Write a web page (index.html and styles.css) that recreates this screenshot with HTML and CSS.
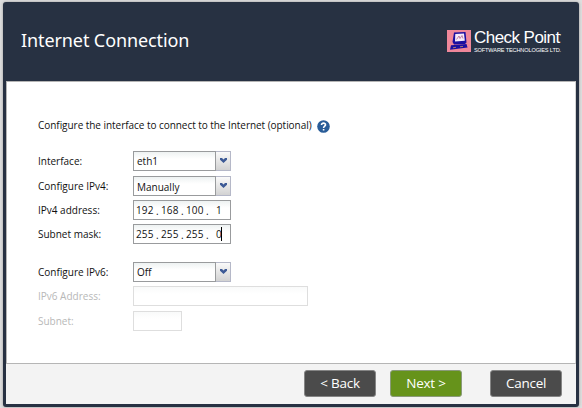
FILE: index.html
```html
<!DOCTYPE html>
<html lang="en">
<head>
<meta charset="utf-8">
<title>Internet Connection</title>
<link rel="stylesheet" href="styles.css">
</head>
<body>
<div class="window">
  <header class="header">
    <h1>Internet Connection</h1>
    <div class="brand">
      <svg class="logo" width="24" height="22" viewBox="0 0 24 22">
        <rect width="24" height="22" fill="#ef879a"/>
        <path d="M7 2.5 18.5 2 19.5 12.5 18 14 7 14.5 5.5 12Z" fill="#1c10a0"/>
        <path d="M8.3 4 17 3.5 17.8 10.8 8 11.5Z" fill="#f6eafa"/>
        <path d="M9.5 9.5 12 6 13 8.5 15 5.5 16 8.5" fill="none" stroke="#b0688c" stroke-width=".8"/>
        <path d="M4 15.3 19.5 14 20.5 17.5 3 19.8Z" fill="#1c10a0"/>
        <path d="M6 17.8 9 17.3M13 16.8 16 16.4" stroke="#a87a70" stroke-width="1"/>
      </svg>
      <div class="brand-text">
        <div class="brand-name">Check Point<i>'</i></div>
        <div class="brand-sub">SOFTWARE TECHNOLOGIES LTD.</div>
      </div>
    </div>
  </header>
  <main class="content">
    <div class="intro"><span>Configure the interface to connect to the Internet (optional)</span>
      <svg width="13" height="13" viewBox="0 0 13 13"><circle cx="6.5" cy="6.5" r="6.3" fill="#295c98"/><path d="M4.5 4.9C4.5 2.5 8.6 2.6 8.5 4.9 8.4 6.3 6.6 6.2 6.6 8M6.6 9V10.6" fill="none" stroke="#fff" stroke-width="1.6"/></svg>
    </div>
    <div class="row r1"><label>Interface:</label><div class="combo"><div class="field">eth1</div><div class="trigger"><svg width="7" height="5" viewBox="0 0 7 5"><path d="M0 0H2L3.5 1.5 5 0H7V1.8L3.5 5 0 1.8Z" fill="#3d5a96"/></svg></div></div></div>
    <div class="row r2"><label>Configure IPv4:</label><div class="combo"><div class="field low">Manually</div><div class="trigger"><svg width="7" height="5" viewBox="0 0 7 5"><path d="M0 0H2L3.5 1.5 5 0H7V1.8L3.5 5 0 1.8Z" fill="#3d5a96"/></svg></div></div></div>
    <div class="row r3"><label>IPv4 address:</label><div class="field ip"><span>192</span><b>.</b><span>168</span><b>.</b><span>100</span><b>.</b><span class="last">1</span></div></div>
    <div class="row r4"><label>Subnet mask:</label><div class="field ip"><span>255</span><b>.</b><span>255</span><b>.</b><span>255</span><b>.</b><span class="last">0</span><em class="caret"></em></div></div>
    <div class="row r5"><label>Configure IPv6:</label><div class="combo"><div class="field">Off</div><div class="trigger"><svg width="7" height="5" viewBox="0 0 7 5"><path d="M0 0H2L3.5 1.5 5 0H7V1.8L3.5 5 0 1.8Z" fill="#3d5a96"/></svg></div></div></div>
    <div class="row r6 disabled"><label>IPv6 Address:</label><div class="field wide"></div></div>
    <div class="row r7 disabled"><label>Subnet:</label><div class="field short"></div></div>
  </main>
  <footer class="footer">
    <div class="btn">&lt; Back</div>
    <div class="btn next">Next &gt;</div>
    <div class="btn cancel">Cancel</div>
  </footer>
</div>
</body>
</html>
```
FILE: styles.css
```css
* { box-sizing: border-box; }
body {
  margin: 0;
  width: 582px;
  height: 408px;
  padding: 2px 3px 1px;
  overflow: hidden;
  background: #dedede;
  font-family: "Open Sans", "Noto Sans", sans-serif;
}
.window {
  height: 405px;
  padding: 0 3px 3px;
  display: flex;
  flex-direction: column;
  background: #273142;
  border-radius: 3px;
  box-shadow: 0 0 3px #999;
}
.header {
  height: 79px;
  padding: 0 13px 0 15px;
  display: flex;
  justify-content: space-between;
}
h1 {
  margin: 26px 0 0;
  font: 400 18px/25px "Noto Sans", sans-serif;
  letter-spacing: -0.1px;
  color: #fff;
}
.brand {
  display: flex;
  width: 116px;
  margin-top: 28px;
  gap: 3px;
  color: #fff;
  font-family: "Liberation Sans", Arial, sans-serif;
  white-space: nowrap;
}
.logo { flex: none; }
.brand-name { font-size: 17px; line-height: 16px; letter-spacing: -0.55px; }
.brand-name i { font-size: 8px; font-style: normal; vertical-align: 4px; line-height: 1px; }
.brand-sub { font-size: 5.6px; line-height: 8px; letter-spacing: -0.14px; }
.content {
  height: 283px;
  padding: 36px 0 0 31px;
  background: #fff;
  border: 1px solid #b5b5b5;
  border-right-color: #d5d5d5;
  font-size: 10px;
  letter-spacing: 0;
  color: #111;
}
.intro { display: flex; height: 16px; gap: 5px; align-items: center; margin-bottom: 17px; letter-spacing: -0.045px; }
.intro span { line-height: 14px; margin-top: -2px; }
.row { display: flex; height: 20px; margin-bottom: 5px; }
.r2, .r3, .r6, .r7 { margin-bottom: 4px; }
.r4 { margin-bottom: 18px; }
.r6 { margin-bottom: 5px; }
.r5 { margin-bottom: 4px; }
label { width: 95px; line-height: 20px; }
.combo { display: flex; }
.field {
  width: 83px;
  height: 20px;
  padding-left: 3px;
  border: 1px solid #999b9d;
  background: linear-gradient(#eef2f2, #fff 7px);
  line-height: 19px;
}
.low { line-height: 20px; }
.trigger {
  width: 15px;
  display: flex;
  justify-content: center;
  padding-top: 6px;
  border: 1px solid #b5b8c8;
  border-left: 0;
  background: linear-gradient(#fafafa, #d2d2d2);
}
.ip { display: flex; width: 98px; padding-left: 2px; }
.ip span { width: 18px; letter-spacing: 0.1px; }
.ip b { width: 7px; padding-left: 2px; font-weight: 400; line-height: 21px; }
.ip .last { padding-left: 5px; width: 10px; }
.caret { width: 1px; height: 14px; margin-top: 2px; background: #000; }
.wide { width: 175px; }
.short { width: 49px; }
.disabled { color: #b8b8b8; }
.disabled .field { border-color: #dedede; background: linear-gradient(#f9fafa, #fff 7px); }
.footer { height: 40px; padding: 6px 14px 0 298px; display: flex; background: #f3f3f3; }
.btn {
  width: 72px;
  height: 27px;
  margin-right: 14px;
  border: 1px solid #858585;
  border-radius: 3px;
  background: #4b4b4b;
  color: #fff;
  font: 13.5px/24px "Open Sans", sans-serif;
  letter-spacing: -0.25px;
  text-align: center;
}
.next { background: #66931b; border-color: #8a9a7a; }
.cancel { margin: 0 0 0 14px; }
```
